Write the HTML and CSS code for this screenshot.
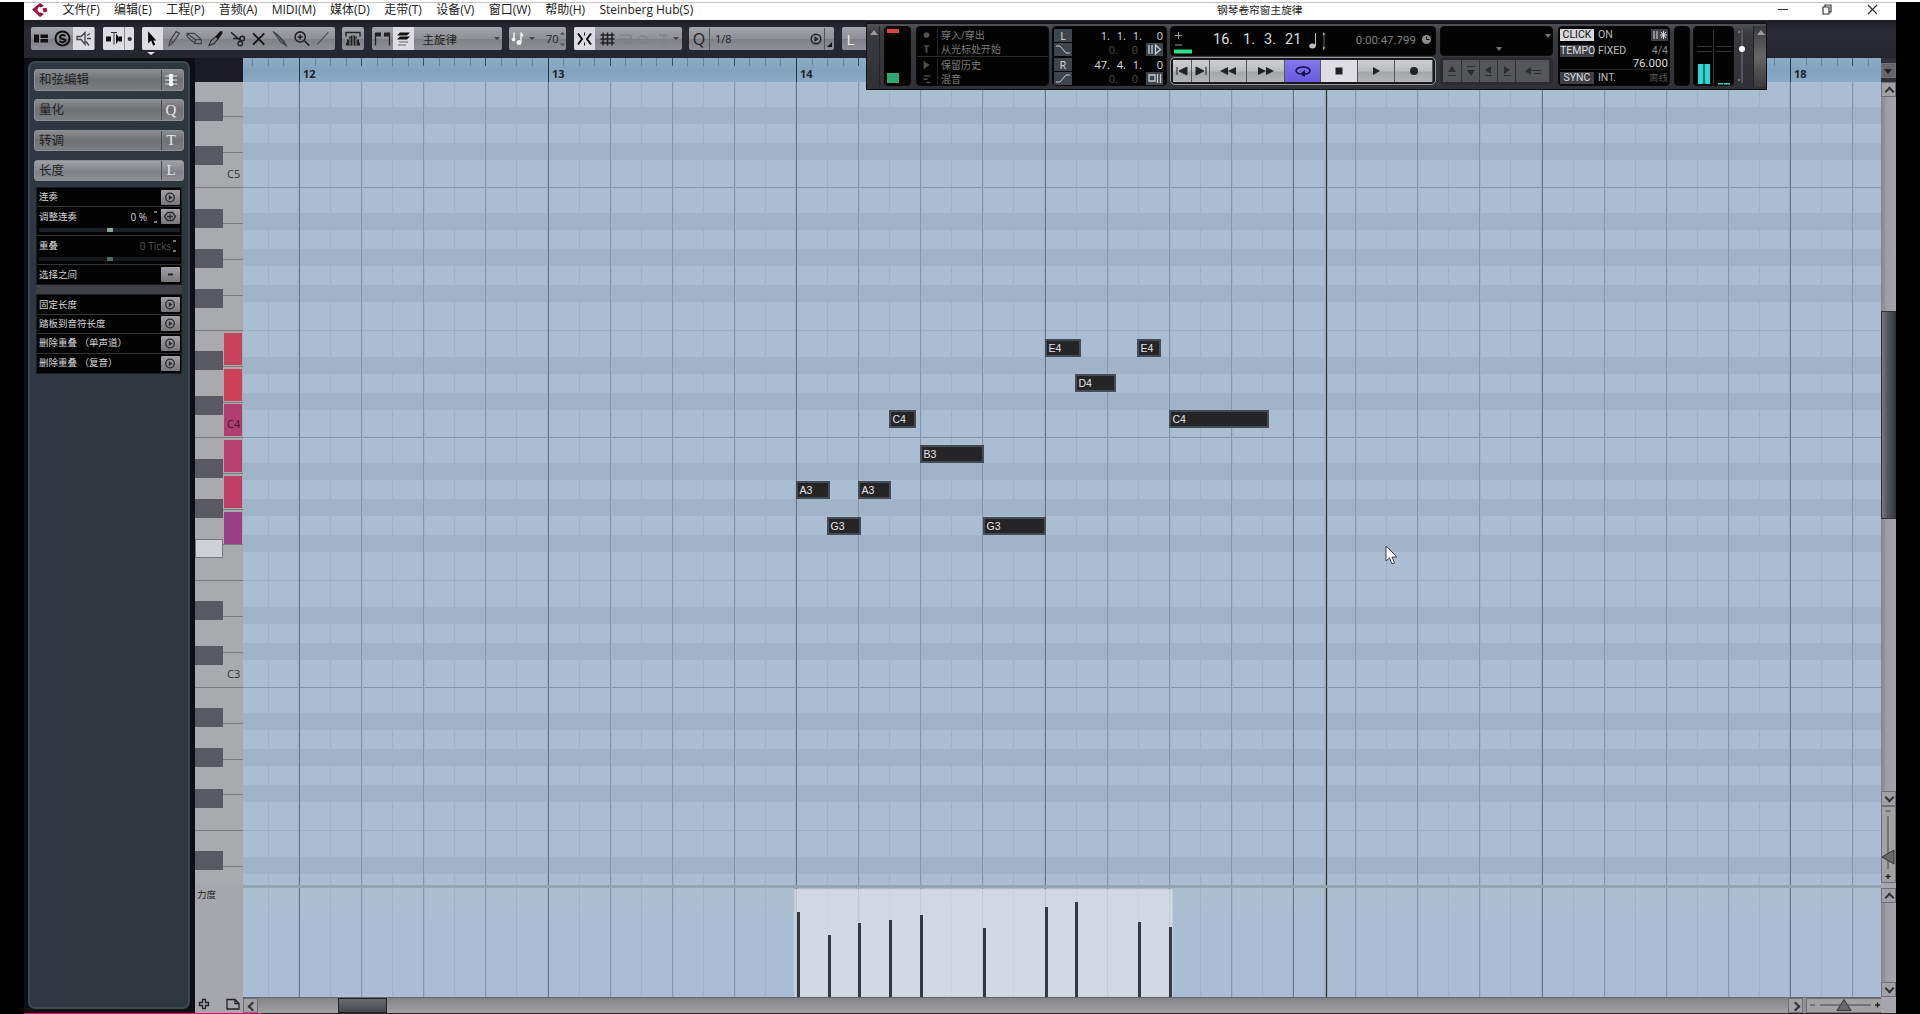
FILE: index.html
```html
<!DOCTYPE html>
<html lang="zh-CN">
<head>
    <meta charset="UTF-8">
    <title>钢琴卷帘窗主旋律</title>
    <link rel="stylesheet" href="styles.css">
</head>
<body>
    <div class="app">
        <!-- Menu bar -->
        <div class="menubar">
            <svg class="logo" width="16" height="16" viewBox="0 0 16 16"><path d="M8 1 0 7.500 8 15 9 11Q5.500 10 5.500 7.500 5.500 5 9 4.500Z" fill="#a3173f"/><path d="M8 1 12 4 8 5.500ZM8 15 12 12 8 10.500Z" fill="#7c1232"/><circle cx="13" cy="8" r="2.300" fill="#a3173f"/></svg>
            <div class="menus">
                <span>文件(F)</span><span>编辑(E)</span><span>工程(P)</span><span>音频(A)</span><span>MIDI(M)</span><span>媒体(D)</span><span>走带(T)</span><span>设备(V)</span><span>窗口(W)</span><span>帮助(H)</span><span>Steinberg Hub(S)</span>
            </div>
            <div class="title">钢琴卷帘窗主旋律</div>
            <svg class="winctl" width="104" height="16" viewBox="0 0 104 16" fill="none" stroke="#333" stroke-width="1.2"><path d="M2 7.500h10M92 3l9 9M101 3l-9 9"/><path d="M47 5h6v7h-6zM49 5V3h6v7h-2"/></svg>
        </div>

        <!-- Toolbar -->
        <div class="toolbar">
            <div class="group w-solo">
                <svg class="ic" viewBox="0 0 21 22"><path d="M3 7h5v8H3zM9.500 7H17v3.500H9.500zM9.500 11.500H17V15H9.500z" fill="#111"/></svg>
                <svg class="ic" viewBox="0 0 21 22"><circle cx="10.500" cy="11" r="7" fill="none" stroke="#111" stroke-width="2"/><path d="M13.500 8.500Q10.500 6.500 8.500 8.500T11 11.500 12.500 14 7.500 13.500" fill="none" stroke="#111" stroke-width="2"/></svg>
                <svg class="ic on" viewBox="0 0 21 22" fill="none" stroke="#444" stroke-width="1.300"><path d="M4 9h4l4-4v12l-4-5H4zM14 8l3-2M14 11h4M13 14l3 4"/></svg>
            </div>
            <div class="group w-scroll">
                <svg class="ic on" viewBox="0 0 21 22"><path d="M3 9h5v5H3zM13 6l4 5.500-4 5zM16 9h3v5h-3z" fill="#111"/><path d="M8 5h6M11 5v12" stroke="#333"/></svg>
                <svg class="ic on small" viewBox="0 0 10 22"><path d="M0 0v22" stroke="#555"/><circle cx="5.500" cy="11.500" r="2" fill="#333"/></svg>
            </div>
            <div class="group w-tools">
                <svg class="ic on" viewBox="0 0 21 22"><path d="M6 4v12l3-3 2 5 2-1-2-4h3z" fill="#080808"/></svg>
                <svg class="ic" viewBox="0 0 21 22" fill="none" stroke="#444" stroke-width="1.200"><path d="M6 18l1-5 6-9 3 2-6 9zM7 13l3 2"/></svg>
                <svg class="ic" viewBox="0 0 21 22" fill="none" stroke="#444" stroke-width="1.200"><path d="M3 6h7l7 6v4h-6l-8-7zM17 12h-6l-8-6M11 12v4"/></svg>
                <svg class="ic" viewBox="0 0 21 22"><path d="M3 18l2-5 5-4 2 2-4 5z" fill="none" stroke="#222"/><path d="M9 9l5-5q3-1 2 2l-4 6z" fill="#111"/></svg>
                <svg class="ic" viewBox="0 0 21 22" fill="none" stroke="#222" stroke-width="1.400"><path d="M4 5l9 8M6 11h7"/><circle cx="15" cy="11" r="2.200"/><circle cx="13" cy="16" r="2.200"/></svg>
                <svg class="ic" viewBox="0 0 21 22"><path d="M5 6l11 11M16 6L5 17" stroke="#111" stroke-width="1.800"/></svg>
                <svg class="ic" viewBox="0 0 21 22" fill="none" stroke="#444" stroke-width="1.200"><path d="M3 4l4 3 7 7 2 4-5-3-5-7zM7 7l8 10"/></svg>
                <svg class="ic" viewBox="0 0 21 22" fill="none" stroke="#222" stroke-width="1.500"><circle cx="9" cy="9.500" r="5"/><path d="M13 13l5 5M6.500 9.500h5M9 7v5"/></svg>
                <svg class="ic" viewBox="0 0 21 22"><path d="M4 17L15 5" stroke="#555" stroke-width="1.300"/></svg>
            </div>
            <div class="group w-one">
                <svg class="ic" viewBox="0 0 21 22"><path d="M4 9V5h14v4" fill="none" stroke="#222" stroke-width="1.400"/><path d="M4 18h14V15h-1v-3h-2V9h-2V8h-4v1H7v3H5v3H4z" fill="#222"/><path d="M8 10v8M11 8v10M14 10v8" stroke="#aaa" stroke-width=".8"/></svg>
            </div>
            <div class="group w-part">
                <svg class="ic" viewBox="0 0 21 22"><path d="M3.500 18V5M17.500 5v13" fill="none" stroke="#222" stroke-width="1.300"/><path d="M4 5h5v4H4zM12 5h5v4h-5z" fill="#222"/></svg>
                <svg class="ic on" viewBox="0 0 21 22"><path d="M7 5h10l-3 3H4zM7 9h10l-3 3H4z" fill="#111"/><path d="M6 14.500h9M5 17.500h8" stroke="#666"/></svg>
                <span class="part-name">主旋律</span>
                <i class="arr"></i>
            </div>
            <div class="group w-vel">
                <svg class="ic narrow" viewBox="0 0 18 22"><path d="M5 5v7M12 5v10M12 5l2 4" stroke="#eee" stroke-width="1.500" fill="none"/><circle cx="4.500" cy="12" r="2" fill="#eee"/><circle cx="10" cy="15" r="2.500" fill="#eee"/></svg>
                <i class="arr"></i><span class="vel-num">70</span>
                <svg class="spin" width="7" height="18" viewBox="0 0 8 18"><path d="M1 4l3-3 3 3zM1 14l3 3 3-3z" fill="#555"/></svg>
            </div>
            <div class="group w-snap">
                <svg class="ic on" viewBox="0 0 21 22" fill="none" stroke="#111" stroke-width="2"><path d="M4 6l4 5.500L4 17M17 6l-4 5.500 4 5.500"/><path d="M10.500 5v3M10.500 15v3" stroke-width="1"/></svg>
                <svg class="ic" viewBox="0 0 21 22"><path d="M8 5v13M12.500 5v13M17 5v13M5.500 7.500h14M5.500 11.500h14M5.500 15.500h14" stroke="#222" stroke-width="1.500"/></svg>
                <svg class="faded" width="52" height="22" viewBox="0 0 52 22" fill="none" stroke="#7c7c81"><path d="M3 7h12v4H3M8 15h7v-4M22 11q3-5 8-2l3 2M33 13q-4 4-8 1M43 7h9M48 7v10"/></svg>
                <i class="arr"></i>
            </div>
            <div class="group w-quant">
                <span class="q">Q</span><span class="qv">1/8</span>
                <svg width="31" height="22" viewBox="0 0 31 22"><circle cx="13" cy="11" r="4.800" fill="none" stroke="#222" stroke-width="1.500"/><path d="M11.500 8v6l4-3z" fill="#222"/><path d="M21.500 0v22" stroke="#555"/><path d="M29 14v5h-5z" fill="#111"/></svg>
            </div>
            <div class="group w-len"><span class="l">L</span></div>
            <i class="tool-mark"></i>
        </div>

        <div class="main">
            <!-- Inspector -->
            <div class="inspector">
                <div class="panel">
                    <div class="head"><span>和弦编辑</span><b><svg width="12" height="14" viewBox="0 0 12 14"><path d="M0 3h12M0 7h12M0 11h12" stroke="#ddd"/><circle cx="6" cy="3" r="2.300" fill="#fff"/><circle cx="6" cy="7" r="2.300" fill="#fff"/><circle cx="6" cy="11" r="2.300" fill="#fff"/></svg></b></div>
                    <div class="head"><span>量化</span><b>Q</b></div>
                    <div class="head"><span>转调</span><b>T</b></div>
                    <div class="head open"><span>长度</span><b>L</b></div>
                    <div class="box">
                        <div class="row"><span>连奏</span><i class="go play"></i></div>
                        <div class="row tall"><div class="line"><span>调整连奏</span><em>0 %</em><u></u><i class="go hex"></i></div><div class="slider"></div></div>
                        <div class="row tall"><div class="line"><span>重叠</span><em class="dim">0 Ticks</em><u></u></div><div class="slider dim"></div></div>
                        <div class="row"><span>选择之间</span><i class="go dash"></i></div>
                    </div>
                    <div class="box second">
                        <div class="row"><span>固定长度</span><i class="go play"></i></div>
                        <div class="row"><span>踏板到音符长度</span><i class="go play"></i></div>
                        <div class="row"><span>删除重叠 （单声道）</span><i class="go play"></i></div>
                        <div class="row"><span>删除重叠 （复音）</span><i class="go play"></i></div>
                    </div>
                </div>
            </div>

            <!-- Key editor -->
            <div class="editor">
                <div class="corner"></div>
                <svg class="ruler" id="ruler" width="1638" height="24"></svg>
                <div class="ruler-end"><i class="sb down"></i></div>

                <svg class="piano" id="piano" width="48" height="803"></svg>
                <div class="grid" id="grid"></div>
                <div class="vscroll">
                    <i class="sb up"></i>
                    <div class="track"><div class="thumb"></div></div>
                    <i class="sb chev"></i>
                    <svg class="vzoom" width="15" height="77" viewBox="0 0 15 77"><path d="M.5.5h14v76H.5z" fill="none" stroke="#707074"/><path d="M4.500 5h5M7 10v53" stroke="#444"/><path d="M4.500 70.500h5M7 68v5" stroke="#222" stroke-width="1.300"/><path d="M1 51l12-7v14z" fill="#68696c" stroke="#333"/></svg>
                </div>

                <div class="split-left"></div><div class="split"></div><div class="split-left"></div>

                <div class="lane-name">力度</div>
                <div class="lane" id="lane"></div>
                <div class="vscroll"><i class="sb up"></i><div class="track"></div><i class="sb chev"></i></div>

                <div class="lane-tools">
                    <svg width="48" height="16" viewBox="0 0 48 16" fill="none" stroke="#222" stroke-width="1.300"><path d="M7.500 2.500h3v3h3v3h-3v3h-3v-3h-3v-3h3zM32 2.500h8l4 4v5.500H32zM40 2.500v4h4"/></svg>
                </div>
                <div class="hscroll">
                    <i class="sb left"></i><div class="track"><div class="thumb"></div></div><i class="sb right"></i>
                    <svg class="hzoom" width="75" height="15" viewBox="0 0 75 15"><path d="M75 .5H.5v14H75" fill="none" stroke="#707074"/><path d="M4 7h5M14 7h51" stroke="#444"/><path d="M69 7h5M71.500 4.500v5" stroke="#222" stroke-width="1.300"/><path d="M38 1.500l7 11H31z" fill="#68696c" stroke="#333"/></svg>
                </div>
                <div class="hend"></div>
            </div>
        </div>
        <div class="baseline"></div>

        <!-- Floating transport panel -->
        <div class="transport">
            <div class="edge"><i class="tri-up"></i></div>
            <div class="lcd t-meter"><i class="clip"></i><i class="lvl"></i></div>
            <div class="lcd t-modes">
                <div class="half">
                    <div><svg viewBox="0 0 21 14"><circle cx="10" cy="7" r="3"/></svg><span>穿入/穿出</span></div>
                    <div><svg viewBox="0 0 21 14"><path d="M7 3h6v1.500h-2V11H9V4.500H7z"/></svg><span>从光标处开始</span></div>
                </div>
                <div class="half">
                    <div><svg viewBox="0 0 21 14"><path d="M7 3h1.500v8H7zM8.500 4l5 3-5 3z"/></svg><span>保留历史</span></div>
                    <div><svg viewBox="0 0 21 14"><path d="M7 3h7v1.500H7zM7 6.500h4V8H7zM10 10h4v1.500h-4z"/></svg><span>混音</span></div>
                </div>
            </div>
            <div class="lcd t-loc">
                <div class="loc"><b>L</b><span>1.</span><span>1.</span><span>1.</span><span>0</span></div>
                <div class="loc off"><b><svg width="18" height="13" viewBox="0 0 18 13"><path d="M2 3h4l6 7h4" fill="none" stroke="#ccc"/></svg></b><span></span><span>0.</span><span>0</span><b class="mini"><svg width="17" height="13" viewBox="0 0 17 13"><path d="M3 2v9M6 2v9M9.500 2v9l5-4.500z" fill="none" stroke="#ccc" stroke-width="1.300"/></svg></b></div>
                <div class="loc second"><b>R</b><span>47.</span><span>4.</span><span>1.</span><span>0</span></div>
                <div class="loc off"><b><svg width="18" height="13" viewBox="0 0 18 13"><path d="M2 10h4l6-7h4" fill="none" stroke="#ccc"/></svg></b><span></span><span>0.</span><span>0</span><b class="mini"><svg width="17" height="13" viewBox="0 0 17 13"><path d="M3 3h6v6H3zM11.500 2v9M14.500 2v9" fill="none" stroke="#ccc" stroke-width="1.300"/></svg></b></div>
            </div>
            <div class="t-main">
                <div class="lcd pos">
                    <svg width="19" height="28" viewBox="0 0 19 28"><path d="M1 8.500h7M4.500 5v7M1 18h7" stroke="#999"/><path d="M0 22.500h18v4H0z" fill="#2ce08a"/></svg>
                    <div class="bars"><span>16.</span><span>1.</span><span>3.</span><span>21</span></div>
                    <svg width="24" height="22" viewBox="0 0 24 22"><path d="M9.500 3v13" stroke="#bbb"/><ellipse cx="6.500" cy="16" rx="3.300" ry="2.500" fill="#bbb"/><path d="M18 4v14" stroke="#666"/><path d="M17 2l2.500 2-2.500 2zM17 20l2.500-2-2.500-2z" fill="#999"/></svg>
                    <span class="clock">0:00:47.799</span>
                    <svg width="11" height="11" viewBox="0 0 11 11"><circle cx="5.500" cy="5.500" r="4.500" fill="#8b8b8b"/><path d="M5.500 2.500v3h3" stroke="#111" fill="none"/></svg>
                </div>
                <div class="btns">
                    <div class="bt" style="width:19px"><svg viewBox="0 0 18 12"><path d="M4 2v8M14 2v8L6 6z" stroke="#222" fill="#222"/></svg></div>
                    <div class="bt" style="width:18px"><svg viewBox="0 0 18 12"><path d="M14 2v8M4 2v8l8-4z" stroke="#222" fill="#222"/></svg></div>
                    <div class="bt" style="width:37px"><svg viewBox="0 0 18 12"><path d="M9 2v8L1 6zM17 2v8L9 6z" fill="#222"/></svg></div>
                    <div class="bt" style="width:38px"><svg viewBox="0 0 18 12"><path d="M1 2v8l8-4zM9 2v8l8-4z" fill="#222"/></svg></div>
                    <div class="bt cycle" style="width:36px"><svg viewBox="0 0 18 12"><path d="M6 9Q2 8 2 5.500 3 2 9 2t7 3.500Q16 9 10 9" fill="none" stroke="#15104a" stroke-width="1.500"/><path d="M11 5v7L6 9z" fill="#15104a"/></svg></div>
                    <div class="bt stop" style="width:37px"><svg viewBox="0 0 18 12"><path d="M5.500 2.500h7v7h-7z" fill="#222"/></svg></div>
                    <div class="bt" style="width:37px"><svg viewBox="0 0 18 12"><path d="M6 2v8l7-4z" fill="#222"/></svg></div>
                    <div class="bt" style="width:38px"><svg viewBox="0 0 18 12"><circle cx="9" cy="6" r="4" fill="#222"/></svg></div>
                </div>
            </div>
            <div class="t-marker">
                <div class="lcd mk"><i class="tri-dn mk-a"></i><i class="tri-dn mk-b"></i></div>
                <div class="btns dead">
                    <div class="bt" style="width:19px"><svg viewBox="0 0 18 12"><path d="M5 7h8L9 1zM5 10h8v1H5z"/></svg></div>
                    <div class="bt" style="width:18px"><svg viewBox="0 0 18 12"><path d="M5 5h8l-4 6zM5 1h8v1H5z"/></svg></div>
                    <div class="bt" style="width:18px"><svg viewBox="0 0 18 12"><path d="M11 1v8L5 5zM5 10h7v1H5z"/></svg></div>
                    <div class="bt" style="width:18px"><svg viewBox="0 0 18 12"><path d="M6 1v8l6-4zM6 10h7v1H6z"/></svg></div>
                    <div class="bt" style="width:34px"><svg viewBox="0 0 18 12"><path d="M7 2v8L1 6zM7 5h10v1H7zM10 8h7v1h-7z"/></svg></div>
                </div>
            </div>
            <div class="lcd t-sync">
                <div class="sy"><b class="lit">CLICK</b><span>ON</span><b class="tiny"><svg width="17" height="12" viewBox="0 0 17 12"><path d="M3 2v8M6 2v8M9 6h7M12.500 2v8M10 3l5 6M15 3l-5 6" stroke="#ddd"/></svg></b></div>
                <div class="sy tempo"><b>TEMPO</b><span>FIXED</span><em class="gray">4/4</em></div>
                <div class="bpm">76.000</div>
                <div class="sy last"><b>SYNC</b><span>INT.</span><em class="dark">离线</em></div>
            </div>
            <div class="lcd t-thin"></div>
            <div class="lcd t-out"><svg width="40" height="60" viewBox="0 0 40 60"><path d="M19.500 3v54M3 19.500h15M22 19.500h15M3 24.500h15M22 24.500h15" stroke="#333"/><path d="M4 37h5.500v20H4zM10.500 37H16v20h-5.500zM24 56h5v1.500h-5zM30 56h6v1.500h-6z" fill="#2bd9d2"/></svg></div>
            <div class="t-fader"><svg width="17" height="60" viewBox="0 0 17 60"><path d="M8 4v53" stroke="#777"/><path d="M5 5v2M5 53v2" stroke="#aaa"/><circle cx="8" cy="23" r="3" fill="#fff"/></svg></div>
            <div class="edge right"><i class="tri-up"></i></div>
        </div>

        <svg class="pointer" width="14" height="21" viewBox="0 0 14 21"><path d="M1 1v15l3.500-3 2.500 6 2.500-1-2.500-6H12z" fill="#fff" stroke="#3a4250"/></svg>
    </div>
    <script src="script.js"></script>
</body>
</html>
```
FILE: styles.css
```css
* {
    box-sizing: border-box;
}
body {
    margin: 0;
    height: 1014px;
    overflow: hidden;
    background-color: #000;
    border-top: 2px solid #fff;
    font-family: "Open Sans", "Noto Sans CJK SC", sans-serif;
    color: #222;
}
i, em, u {
    font-style: normal;
    text-decoration: none;
}
svg {
    display: block;
    flex: none;
}
.app {
    position: relative;
    width: 1872px;
    height: 1012px;
    margin-left: 24px;
    display: flex;
    flex-direction: column;
}

/* menu bar */
.menubar {
    height: 18px;
    background-color: #fefefe;
    border-top: 1px solid #c4c4c4;
    display: flex;
    align-items: center;
    padding: 0 16px 3px 8px;
    font-size: 12px;
    line-height: 14px;
    white-space: nowrap;
}
.menus {
    display: flex;
    gap: 14.3px;
    margin-left: 14.5px;
    width: 1154.5px;
}
.title {
    flex: 1;
    font-size: 10.7px;
}

/* toolbar */
.toolbar {
    position: relative;
    height: 38px;
    background: linear-gradient(#1e1f25, #2a2b32 30%, #25262d);
    display: flex;
    gap: 7.5px;
    padding: 7px 0 0 7px;
}
.group {
    height: 23px;
    border-radius: 2px;
    background: linear-gradient(#a5a6ab, #8f9095 50%, #7f8085 52%, #8f9095);
    display: flex;
    align-items: center;
    flex: none;
    overflow: hidden;
}
.w-solo { width: 64px; }
.w-scroll { width: 31.5px; }
.w-tools { width: 193px; }
.w-one { width: 22px; }
.w-part { width: 130px; }
.w-vel { width: 57px; }
.w-snap { width: 108px; }
.w-quant { width: 145px; }
.w-len { width: 60px; }
.ic {
    flex: 0 0 auto;
    width: 21px;
    height: 23px;
}
.w-tools .ic {
    width: 21.4px;
}
.ic.small {
    width: 10.5px;
}
.ic.narrow {
    width: 18px;
}
.ic.on {
    background-color: #dcdce2;
}
.part-name {
    font-size: 11.5px;
    margin-left: 9px;
    flex: 1;
}
.arr {
    border: 3px solid transparent;
    border-top-color: #444;
    border-bottom: 0;
    margin: 0 2px;
}
.vel-num {
    font-size: 11px;
    margin-left: 9px;
}
.w-snap .arr {
    margin-left: 5px;
}
.q {
    width: 21px;
    font-size: 16px;
    text-align: center;
    border-right: 1px solid #555;
    line-height: 22px;
}
.qv {
    font-size: 11px;
    padding-left: 5px;
    flex: 1;
}
.l {
    color: #eee;
    font-size: 15px;
    padding-left: 5px;
}
.tool-mark {
    position: absolute;
    left: 123px;
    top: 32px;
    border: 4px solid transparent;
    border-top: 3px solid #e8e8e8;
    border-bottom: 0;
}

.main {
    height: 955px;
    display: flex;
}
.baseline {
    height: 1px;
    background: linear-gradient(90deg, #d80b72 237px, #2a222a 238px);
}

/* inspector */
.inspector {
    width: 171px;
    background-color: #0c0e14;
    padding: 3px 5px 4px 4px;
}
.panel {
    height: 100%;
    border: 2px solid #3c4850;
    border-radius: 7px;
    background: linear-gradient(90deg, #303743, #30373f 50%, #2d383e);
    padding: 6px 4px 0;
    display: flex;
    flex-direction: column;
}
.head {
    height: 21.500px;
    margin-bottom: 8.800px;
    flex: none;
    border-radius: 3px;
    background: linear-gradient(#8c8d91, #6f7074 50%, #7d7e82);
    border: 1px solid #8f9094;
    display: flex;
    font-size: 12.500px;
    line-height: 19px;
}
.head.open {
    background: linear-gradient(#a0a1a7, #808186 60%, #8d8e93);
}
.head span {
    flex: 1;
    padding-left: 4px;
}
.head b {
    width: 22px;
    border-left: 1px solid #4a4b50;
    color: #e8e8ea;
    font: 15px/19px "Liberation Serif", serif;
    display: flex;
    justify-content: center;
    align-items: center;
    padding-right: 3px;
}
.box {
    margin: -3px 2px 0;
    border: 1px solid #1a1c20;
    background-color: #030303;
    color: #d5d5d5;
    font-size: 9.500px;
}
.box.second {
    margin-top: 9px;
    box-shadow: 0 -9px 0 #3e4045;
}
.row {
    height: 19.300px;
    border-bottom: 1px solid #333;
    display: flex;
    align-items: center;
    justify-content: space-between;
    padding: 0 1px 0 2px;
    line-height: 14px;
    white-space: nowrap;
}
.second .row {
    height: 19.400px;
}
.row:last-child {
    border-bottom: 0;
}
.row.tall {
    height: 28.800px;
    display: block;
    padding-top: 1px;
}
.line {
    height: 17px;
    display: flex;
    align-items: center;
}
.line span {
    flex: 1;
}
.line em {
    font-size: 10px;
    margin-right: 6px;
}
.line em.dim {
    color: #555;
    margin-right: 1px;
}
.line u {
    width: 5px;
    height: 12px;
    margin-right: 3px;
    background: linear-gradient(#777, #777) 1px 0 / 3px 2px no-repeat, linear-gradient(#777, #777) 1px 10px / 3px 2px no-repeat;
}
.slider {
    height: 4px;
    margin: 3px 0 0;
    background: linear-gradient(#86a99a, #86a99a) 50% 0 / 6px 4px no-repeat, #1b2024;
}
.slider.dim {
    background: linear-gradient(#4f6c60, #4f6c60) 50% 0 / 6px 4px no-repeat, #15191c;
}
.go {
    width: 19px;
    height: 15px;
    border-radius: 1px;
    background: linear-gradient(#a0a1a4, #77787b);
}

/* key editor */
.editor {
    display: grid;
    grid-template-columns: 48px 1638px 15px;
    grid-template-rows: 24px 803px 3px 109px 16px;
}
.corner {
    background-color: #1a1c24;
}
.ruler {
    background: linear-gradient(#8cacc8, #82a2be 50%, #8aaac6);
    font-weight: bold;
    font-size: 11px;
}
.ruler-end {
    background-color: #30323a;
    padding-top: 5px;
}
.piano {
    background-color: #a9aaae;
}
.piano text {
    font-size: 11px;
}
.grid {
    position: relative;
    background-color: #aabdd3;
    overflow: hidden;
}
.lane {
    position: relative;
    background: linear-gradient(#abbfd0, #abbdd4 30%);
}
.note {
    position: absolute;
    height: 18px;
    border: 2px solid #464c57;
    background-color: #252427;
    color: #e6e6e6;
    font: 10.500px/15px "Liberation Sans", sans-serif;
    padding-left: 1.500px;
}
.playhead {
    position: absolute;
    left: 1083px;
    top: 0;
    width: 1px;
    height: 100%;
    background-color: #30363c;
    box-shadow: 1px 0 0 #98a8b0, -1px 0 0 #98a8b4;
}
.selection {
    position: absolute;
    left: 551px;
    top: 1px;
    width: 379px;
    height: 108px;
    background-color: rgba(226, 230, 236, .68);
    border: 1px dotted #c3c3c8;
}
.bar {
    position: absolute;
    bottom: 0;
    width: 3px;
    background-color: #343944;
}
.split {
    background-color: #92a5b1;
}
.split-left, .lane-name, .lane-tools, .hend {
    background-color: #a6a7ac;
}
.lane-name {
    font-size: 9.500px;
    line-height: 13px;
    padding-left: 2px;
}

/* scroll bars */
.vscroll {
    display: flex;
    flex-direction: column;
    background-color: #a6a7ac;
}
.sb {
    position: relative;
    display: block;
    width: 15px;
    height: 15px;
    flex: none;
    background-color: #a2a2a6;
    border: 1px solid #707074;
}
.sb::after {
    content: "";
    position: absolute;
    left: 4px;
    top: 5px;
    width: 5px;
    height: 5px;
    border: solid #333;
    border-width: 2px 0 0 2px;
    transform: rotate(45deg);
}
.sb.chev::after {
    top: 2px;
    transform: rotate(225deg);
}
.sb.left::after {
    top: 4px;
    left: 5px;
    transform: rotate(-45deg);
}
.sb.right::after {
    top: 4px;
    left: 3px;
    transform: rotate(135deg);
}
.sb.down {
    background-color: #66676c;
}
.sb.down::after {
    border: 4px solid transparent;
    border-top: 5px solid #222;
    width: 0;
    height: 0;
    left: 2px;
    transform: none;
}
.track {
    flex: 1;
    background: linear-gradient(90deg, #858488, #a09fa3 40%, #a5a4a8);
}
.vscroll .thumb {
    height: 208px;
    margin-top: 214px;
    border: 1px solid #333;
    background: linear-gradient(90deg, #777a7d, #55585c 40%, #35383d);
}
.vzoom {
    background-color: #a2a2a5;
    margin-bottom: 2px;
}
.hscroll {
    display: flex;
    border-top: 1px solid #65676b;
    background-color: #929295;
}
.hscroll .track {
    background: linear-gradient(#848487, #a2a2a4);
}
.hscroll .thumb {
    width: 49px;
    height: 15px;
    margin-left: 80px;
    border: 1px solid #222;
    background: linear-gradient(#686b70, #45484d);
}
.hzoom {
    margin-left: 3px;
    background-color: #a2a2a5;
}

/* transport panel */
.transport {
    position: absolute;
    left: 842px;
    top: 20px;
    width: 901px;
    height: 68px;
    border: 1px solid #111;
    border-top: 2px solid #141418;
    background: linear-gradient(#505154, #3a3b3f 15%, #303136);
    display: flex;
    padding: 2px 0;
    color: #ddd;
}
.lcd {
    background-color: #030303;
    border: 1px solid #0a0a0a;
    border-radius: 4px;
    overflow: hidden;
    flex: none;
}
.edge {
    width: 13px;
    margin-right: 4px;
    padding: 4px 0 0 3px;
    border-right: 1px solid #222;
    flex: none;
}
.edge.right {
    border-right: 0;
    border-left: 1px solid #222;
    margin: 0;
    background: linear-gradient(#3a3a3d, #666, #3a3a3d);
}
.tri-up {
    display: block;
    width: 0;
    border: 4px solid transparent;
    border-top: 0;
    border-bottom: 5px solid #999;
}
.tri-dn {
    position: absolute;
    border: 3px solid transparent;
    border-top: 4px solid #777;
    border-bottom: 0;
}
.t-meter {
    width: 27px;
    height: 60px;
    padding: 2px;
    display: flex;
    flex-direction: column;
    justify-content: space-between;
}
.clip, .lvl {
    width: 12px;
    height: 4px;
    background-color: #d8404a;
}
.lvl {
    height: 10px;
    background-color: #31a670;
}
.t-modes {
    width: 133px;
    height: 60px;
    margin-left: 5px;
    font-size: 10px;
    line-height: 14px;
    color: #7c7c7c;
}
.half {
    padding: 1px 0 0;
    height: 30px;
    border-bottom: 1px solid #2a2a2a;
}
.half div {
    display: flex;
}
.half svg {
    width: 21px;
    height: 14px;
    fill: #505050;
    border-right: 1px solid #222;
}
.half span {
    padding-left: 3px;
}
.t-loc {
    width: 115px;
    height: 60px;
    margin-left: 3px;
    padding: 2px 1px;
    font-size: 11px;
    line-height: 13px;
}
.loc {
    display: flex;
    height: 13px;
    margin-bottom: 1px;
}
.loc.second {
    margin-top: 2px;
}
.loc b {
    width: 18px;
    background-color: #3d454d;
    color: #ddd;
    text-align: center;
    font-weight: normal;
}
.loc span {
    text-align: right;
    width: 16px;
}
.loc span:nth-child(2) {
    width: 38px;
}
.loc span:nth-child(5) {
    width: 21px;
}
.loc.off span {
    color: #4a4a4a;
}
.loc.off span:nth-child(2) {
    width: 30px;
}
.loc.off span:nth-child(4) {
    width: 20px;
}
.loc .mini {
    width: 17px;
    margin-left: 8px;
}
.t-main {
    width: 266px;
    margin-left: 3px;
    flex: none;
}
.pos {
    height: 30px;
    display: flex;
    align-items: center;
    padding-left: 3px;
}
.bars {
    display: flex;
    width: 108px;
    padding-left: 20px;
    margin-top: -2px;
    font: 14.500px/24px Roboto, sans-serif;
}
.bars span {
    width: 30px;
    flex: none;
}
.bars span + span {
    width: 21px;
}
.bars + svg {
    margin-left: 5px;
}
.clock {
    font: 11.500px/20px Roboto, sans-serif;
    color: #808080;
    width: 65px;
    text-align: right;
    margin-left: 21px;
    margin-top: -2px;
}
.clock + svg {
    margin: -3px 0 0 5px;
}
.btns {
    display: flex;
    height: 28px;
    margin-top: 1px;
    padding: 2px;
    border: 1px solid #999;
    border-radius: 5px;
    background-color: #18181b;
}
.bt {
    border-right: 1px solid #55565a;
    background: linear-gradient(#cfd0d4, #bbbcc0 50%, #a4a5a9 55%, #b5b6ba);
    display: flex;
    align-items: center;
    justify-content: center;
}
.bt svg {
    width: 18px;
    height: 12px;
}
.bt.cycle {
    background: linear-gradient(#8478ee, #6a59dc);
}
.bt.stop {
    background: #dddde3;
}
.t-marker {
    width: 113px;
    margin-left: 4px;
    flex: none;
}
.mk {
    position: relative;
    height: 30px;
}
.mk-a { right: 1px; top: 7px; }
.mk-b { left: 55px; top: 20px; }
.btns.dead {
    border-color: #2c2c30;
    background-color: #2c2c30;
}
.dead .bt {
    background: #55565a;
    border-color: #333;
}
.dead svg {
    fill: #2d2d30;
}
.t-sync {
    width: 112px;
    height: 60px;
    margin-left: 5px;
    padding: 2px 1px 0;
    font: 10.500px/12px Roboto, "Noto Sans CJK SC", sans-serif;
}
.sy {
    display: flex;
    height: 12px;
}
.sy b {
    width: 34px;
    text-align: center;
    font-weight: normal;
    background-color: #3d4147;
}
.sy b.lit {
    background-color: #d8d8da;
    color: #111;
}
.sy b.tiny {
    width: 17px;
}
.sy span {
    flex: 1;
    padding-left: 4px;
    color: #bbb;
}
.sy.tempo {
    margin-top: 4px;
}
.gray {
    color: #888;
}
.dark {
    color: #555;
    font-size: 9.500px;
}
.bpm {
    text-align: right;
    font-size: 11.500px;
    height: 13px;
    line-height: 12px;
    border-bottom: 1px solid #222;
}
.sy.last {
    margin-top: 2px;
}
.t-thin {
    width: 16px;
    height: 60px;
    margin-left: 4px;
}
.t-out {
    width: 41px;
    height: 60px;
    margin-left: 3px;
}
.t-fader {
    flex: 1;
}

.pointer {
    position: absolute;
    left: 1361px;
    top: 543px;
}
```
FILE: script.js
```js
// all positions are relative to the grid's top left corner
const BAR = 248.5;
const FIRST_BAR = 56;      // bar 12
const OCTAVE = 249.9;
const WIDTH = 1638;
const HEIGHT = 803;

const notes = [
    { name: 'A3', x: 553, y: 399, w: 34 },
    { name: 'G3', x: 584, y: 435, w: 34 },
    { name: 'A3', x: 615, y: 399, w: 33 },
    { name: 'C4', x: 646, y: 328, w: 27 },
    { name: 'B3', x: 677, y: 363, w: 64 },
    { name: 'G3', x: 740, y: 435, w: 63 },
    { name: 'E4', x: 802, y: 257, w: 36 },
    { name: 'D4', x: 832, y: 292, w: 41 },
    { name: 'E4', x: 894, y: 257, w: 24 },
    { name: 'C4', x: 926, y: 328, w: 100 }
];

const velocities = [
    [554, 85], [585, 62], [615, 74], [646, 77], [677, 82],
    [740, 69], [802, 90], [832, 95], [895, 75], [926, 70]
];

// small icons of the inspector buttons
const goIcons = {
    play: '<circle cx="9" cy="7.500" r="4.300" fill="none" stroke="#2a2a2a" stroke-width="1.300"/><path d="M7.800 5v5l3.700-2.500z" fill="#2a2a2a"/>',
    hex: '<path d="M6.500 3.500h5l3 4-3 4h-5l-3-4z" fill="none" stroke="#2a2a2a" stroke-width="1.300"/><path d="M6 7.500h6M9 5v5" stroke="#2a2a2a" stroke-width="1.300"/>',
    dash: '<path d="M7 6.500h5v2H7z" fill="#222"/>'
};

function rect(x, y, w, h, fill) {
    return `<rect x="${x}" y="${y}" width="${w}" height="${h}" fill="${fill}"/>`;
}

// Draw bar and beat lines
function verticals(height, withBands) {
    let half = '';
    let beats = '';
    for (let i = -2; i < 56; i++) {
        const x = Math.round(FIRST_BAR + i * BAR / 8);
        if (x < 0 || x >= WIDTH) continue;
        if (i % 8 === 0) {
            beats += rect(x, 0, 1, height, '#61778c') + rect(x - 1, 0, 1, height, '#9aaec4');
        } else if (i % 2 === 0) {
            beats += rect(x, 0, 1, height, '#8097b0') + rect(x + 1, 0, 1, height, '#a1b4ca');
        } else {
            half += rect(x, 0, 1, height, '#9db1c8');
        }
    }
    return half + (withBands ? bands() : '') + beats;
}

// Draw the darker rows of the black keys
function bands() {
    let out = '';
    for (let top = 105.4 - OCTAVE; top < HEIGHT; top += OCTAVE) {
        [26, 62, 98, 169.800, 205.300].forEach(o => {
            out += rect(0, Math.round(top + o), WIDTH, 17, '#a1b3c9');
        });
        out += rect(0, Math.round(top + 142.800), WIDTH, 1, '#9caec3');
        out += rect(0, Math.round(top), WIDTH, 1, '#8297ab');
    }
    return out;
}

function renderRuler() {
    let out = '';
    for (let i = -3; i < 112; i++) {
        const x = Math.round(FIRST_BAR + i * BAR / 16);
        if (x >= WIDTH) continue;
        if (i % 16 === 0) {
            out += rect(x, 0, 1, 24, '#26384a');
            out += `<text x="${x + 4}" y="20" fill="#1a2530">${12 + i / 16}</text>`;
        } else {
            out += rect(x, 0, 1, 8, i % 4 === 0 ? '#38536c' : '#66839e');
        }
    }
    document.getElementById('ruler').innerHTML = out;
}

function renderPiano() {
    let out = '';
    for (let o = 0; o < 4; o++) {
        const top = 105.4 + (o - 1) * OCTAVE;
        for (let k = 0; k < 7; k++) {
            const full = k === 0 || k === 4;
            out += rect(full ? 0 : 28, Math.round(top + k * OCTAVE / 7), full ? 48 : 20, 1, '#7b7c80');
        }
        [21.200, 61.200, 101.400, 164, 208.200].forEach(b => {
            out += rect(0, Math.round(top + b), 28, 19, '#575a60');
        });
    }
    // pitches used by the part
    ['#c8425e', '#cc4256', '#b03e70', '#b83f6e', '#be4066', '#973f88'].forEach((c, i) => {
        out += rect(29, Math.round(251 + i * 35.700), 18, 32, c);
    });
    // pressed key
    out += rect(0, 457, 28, 19, '#77787c') + rect(1, 458, 26, 17, '#d0d1d6');
    out += '<text x="32" y="96" fill="#333">C5</text><text x="32" y="346" fill="#4a1030">C4</text><text x="32" y="596" fill="#333">C3</text>';
    document.getElementById('piano').innerHTML = out;
}

function renderGrid() {
    const grid = document.getElementById('grid');
    grid.innerHTML = `<svg width="${WIDTH}" height="${HEIGHT}">${verticals(HEIGHT, true)}</svg>`;
    notes.forEach(n => {
        grid.innerHTML += `<div class="note" style="left:${n.x}px;top:${n.y}px;width:${n.w}px">${n.name}</div>`;
    });
    grid.innerHTML += '<div class="playhead"></div>';
}

function renderLane() {
    const lane = document.getElementById('lane');
    let out = `<svg width="${WIDTH}" height="109">${verticals(109, false)}</svg><div class="selection"></div>`;
    velocities.forEach(v => {
        out += `<div class="bar" style="left:${v[0]}px;height:${v[1]}px"></div>`;
    });
    lane.innerHTML = out + '<div class="playhead"></div>';
}

function renderButtons() {
    document.querySelectorAll('.go').forEach(b => {
        b.innerHTML = `<svg width="19" height="15" viewBox="0 0 19 15">${goIcons[b.classList[1]]}</svg>`;
    });
}

renderRuler();
renderPiano();
renderGrid();
renderLane();
renderButtons();
```
